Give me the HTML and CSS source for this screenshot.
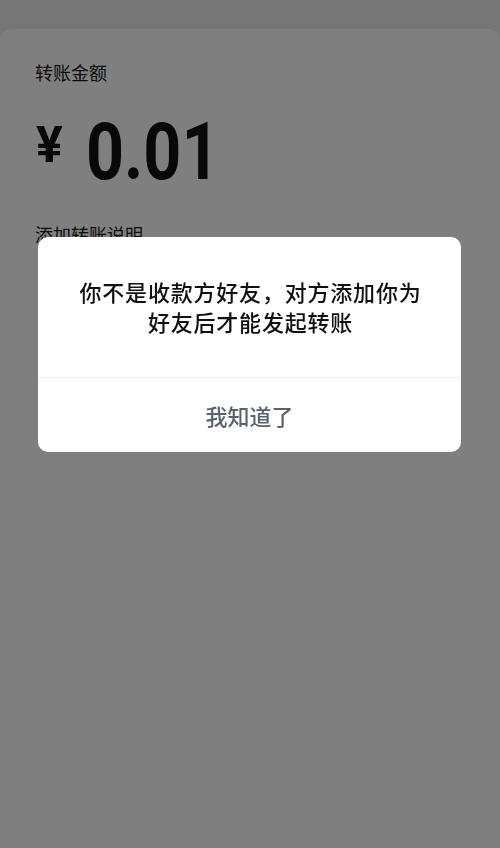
FILE: index.html
```html
<!DOCTYPE html>
<html lang="zh-CN">
<head>
<meta charset="utf-8">
<title>转账</title>
<link rel="stylesheet" href="styles.css">
</head>
<body>
<div class="page">
  <div class="card">
    <div class="label">转账金额</div>
    <div class="amount">
      <span class="yen">¥</span>
      <span class="num">0.01</span>
    </div>
    <div class="note">添加转账说明</div>
  </div>
</div>
<div class="mask">
  <div class="dialog">
    <div class="dialog-body">你不是收款方好友，对方添加你为好友后才能发起转账</div>
    <div class="dialog-btn">我知道了</div>
  </div>
</div>
</body>
</html>
```
FILE: styles.css
```css
html, body {
  margin: 0;
  padding: 0;
  height: 100%;
}
body {
  background: #ededed;
  font-family: "Noto Sans CJK SC", "Noto Sans", sans-serif;
  color: #191919;
  overflow: hidden;
}
.page {
  padding-top: 29px;
  height: 100%;
  box-sizing: border-box;
}
.card {
  background: #ffffff;
  border-radius: 12px 12px 0 0;
  height: 100%;
  padding: 31px 35px 0 35px;
  box-sizing: border-box;
}
.label {
  font-size: 18px;
  line-height: 24px;
}
.amount {
  display: flex;
  align-items: flex-start;
  margin-top: 28px;
  font-family: Roboto, "Liberation Sans", sans-serif;
  color: #111;
}
.yen {
  font-size: 50px;
  line-height: 1;
  font-weight: 700;
  margin-top: 8px;
  margin-left: 1px;
}
.num {
  display: inline-block;
  font-size: 80px;
  line-height: 1;
  font-weight: 700;
  letter-spacing: 0px;
  margin-left: 23px;
  transform: scaleX(0.83);
  transform-origin: left center;
}
.note {
  margin-top: 30px;
  font-size: 18px;
  line-height: 24px;
}
.mask {
  position: fixed;
  inset: 0;
  background: rgba(0, 0, 0, 0.5);
}
.dialog {
  position: absolute;
  left: 38px;
  top: 237px;
  width: 423px;
  background: #fff;
  border-radius: 10px;
  overflow: hidden;
}
.dialog-body {
  height: 141px;
  box-sizing: border-box;
  padding: 39px 34px 0 36px;
  text-align: center;
  font-size: 22px;
  font-weight: 500;
  line-height: 30px;
  letter-spacing: 0.8px;
  color: #111;
  border-bottom: 1px solid #f0f0f0;
}
.dialog-btn {
  height: 74px;
  display: flex;
  align-items: center;
  justify-content: center;
  font-size: 22px;
  font-weight: 500;
  color: #5a626d;
}
```
